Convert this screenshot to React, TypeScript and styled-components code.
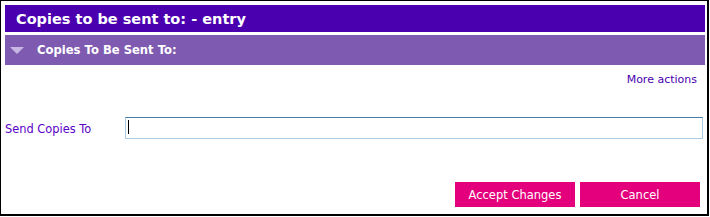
import React from "react";
import styled, {createGlobalStyle} from "styled-components";

const GlobalStyle = createGlobalStyle`
    html, body {
        margin: 0;
        padding: 0;
        background: #ffffff;
    }
    body {
        font-family: "DejaVu Sans", Verdana, sans-serif;
    }
`;

const Frame = styled.div`
    width: 709px;
    height: 216px;
    box-sizing: border-box;
    border-style: solid;
    border-color: #000000;
    border-width: 1px 2px 2px 1px;
    padding: 4px 2px 0 4px;
    display: flex;
    flex-direction: column;
`;

const TitleBar = styled.div`
    height: 27px;
    background: #4b00b0;
    color: #ffffff;
    font-weight: bold;
    font-size: 14.5px;
    display: flex;
    align-items: center;
    padding-left: 11px;
    margin-bottom: 3px;
`;

const SectionBar = styled.div`
    height: 30px;
    background: #7e5ab0;
    color: #ffffff;
    font-weight: bold;
    font-size: 11.6px;
    display: flex;
    align-items: center;
    padding-left: 5px;
    gap: 13px;
`;

const Arrow = styled.span`
    width: 0;
    height: 0;
    border-left: 7px solid transparent;
    border-right: 7px solid transparent;
    border-top: 7px solid #c8b6e4;
    margin-top: 1px;
`;

const ActionsRow = styled.div`
    display: flex;
    justify-content: flex-end;
    padding: 8px 8px 0 0;
    height: 22px;
`;

const LinkText = styled.a`
    color: #4b00b0;
    font-size: 11px;
    text-decoration: none;
    cursor: pointer;
`;

const FieldRow = styled.div`
    display: flex;
    align-items: center;
    margin-top: 22px;
`;

const Label = styled.label`
    width: 120px;
    color: #5a00c8;
    font-size: 11.4px;
    padding-top: 1px;
`;

const InputWrap = styled.div`
    position: relative;
    width: 578px;
`;

const TextInput = styled.input`
    width: 100%;
    height: 22px;
    box-sizing: border-box;
    border: 1px solid #a8cce8;
    border-top-color: #4a7ca8;
    padding: 0 2px;
    font-family: "DejaVu Sans", Verdana, sans-serif;
    font-size: 11px;
    outline: none;
    background: #ffffff;
    caret-color: transparent;
    display: block;
`;

const Caret = styled.span`
    position: absolute;
    left: 3px;
    top: 3px;
    width: 1px;
    height: 14px;
    background: #000000;
    pointer-events: none;
`;

const ButtonRow = styled.div`
    display: flex;
    justify-content: flex-end;
    gap: 5px;
    margin-top: 43px;
    padding-right: 5px;
`;

const PinkButton = styled.button`
    width: 120px;
    height: 25px;
    background: #e4007c;
    color: #ffffff;
    border: none;
    font-family: "DejaVu Sans", Verdana, sans-serif;
    font-size: 11.5px;
    padding: 0;
    cursor: pointer;
`;

export default function App() {
    return (
        <>
            <GlobalStyle/>
            <Frame>
                <TitleBar>Copies to be sent to: - entry</TitleBar>
                <SectionBar>
                    <Arrow/>
                    <span>Copies To Be Sent To:</span>
                </SectionBar>
                <ActionsRow>
                    <LinkText>More actions</LinkText>
                </ActionsRow>
                <FieldRow>
                    <Label htmlFor="sendCopies">Send Copies To</Label>
                    <InputWrap>
                        <TextInput id="sendCopies"/>
                        <Caret/>
                    </InputWrap>
                </FieldRow>
                <ButtonRow>
                    <PinkButton>Accept Changes</PinkButton>
                    <PinkButton>Cancel</PinkButton>
                </ButtonRow>
            </Frame>
        </>
    );
}
